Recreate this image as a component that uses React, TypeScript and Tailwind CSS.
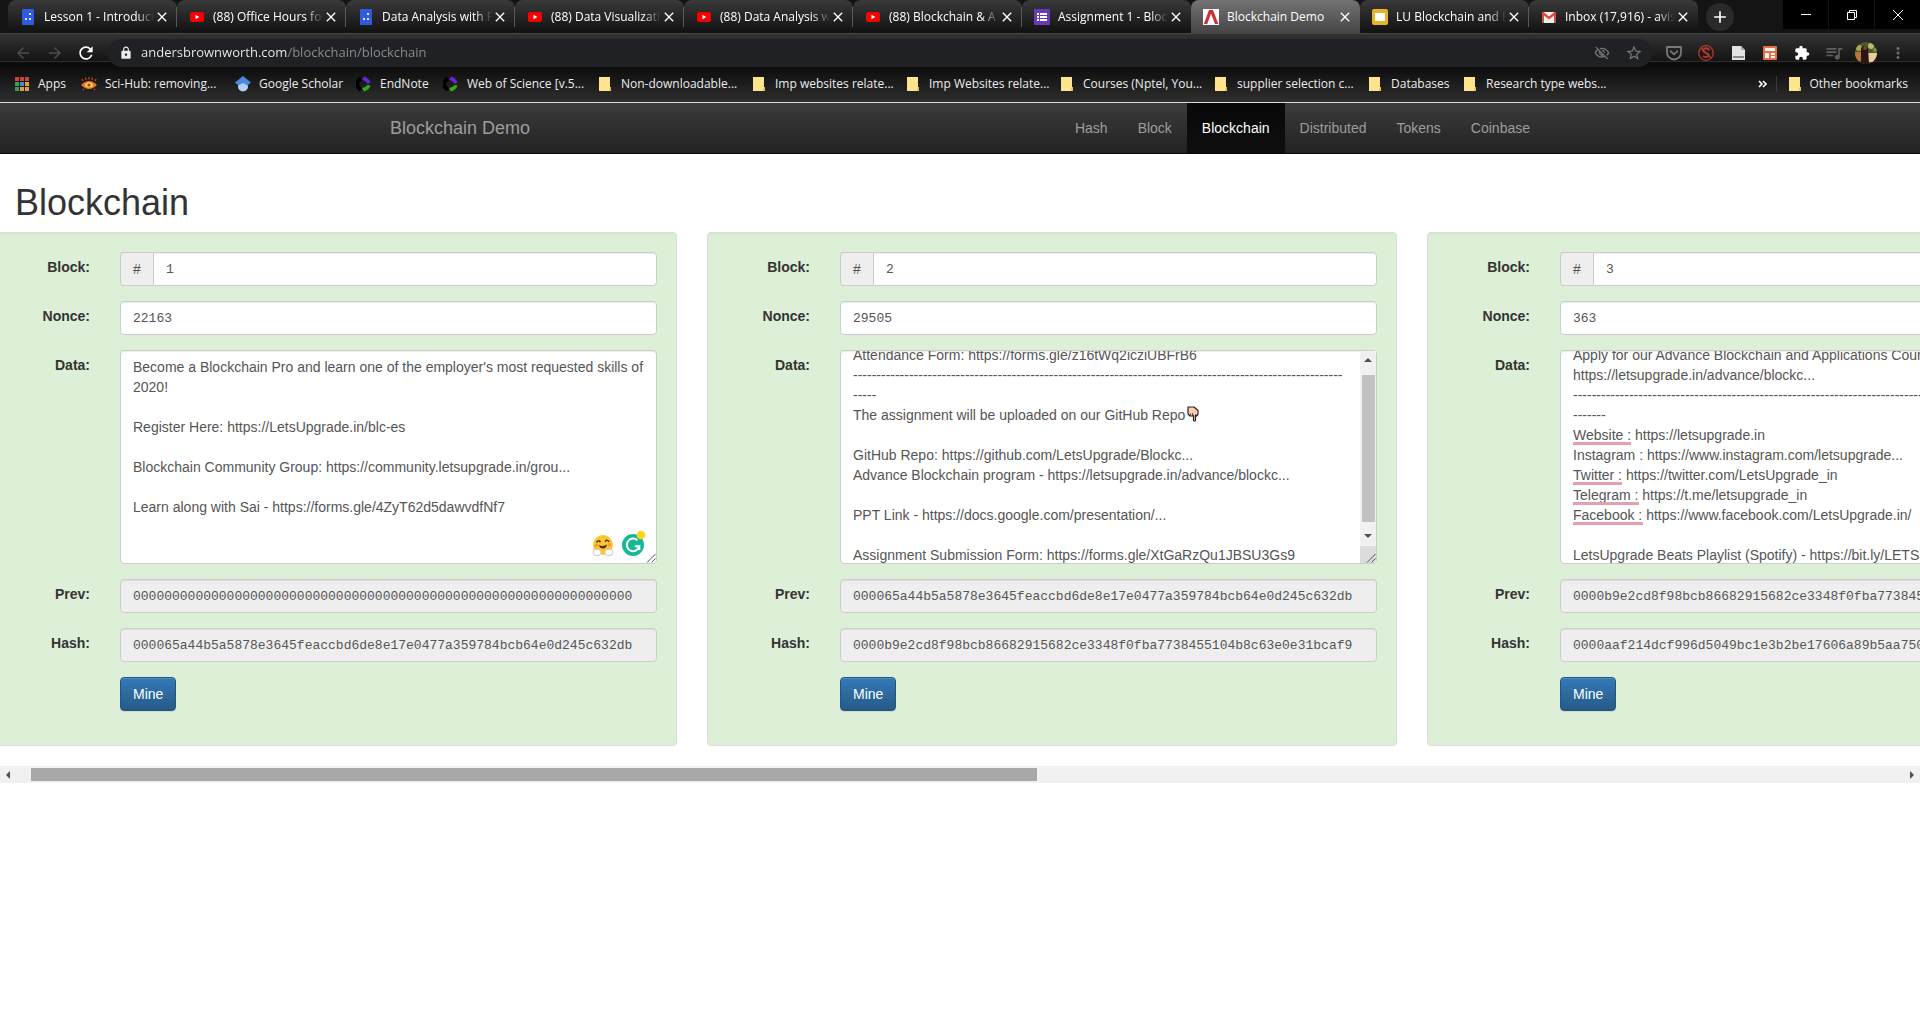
import { useEffect, useRef } from "react";
import type { ReactNode } from "react";
import {
  MdAdd,
  MdArrowBack,
  MdArrowForward,
  MdClose,
  MdExtension,
  MdLock,
  MdMoreVert,
  MdOutlineVisibilityOff,
  MdQueueMusic,
  MdRefresh,
  MdStarBorder,
} from "react-icons/md";

/* ---------- small drawings ---------- */

const BlueFavicon = () => (
  <svg viewBox="0 0 16 16" className="size-4 shrink-0">
    <rect x="2" width="12" height="16" rx="1" fill="#2f5be0" />
    <g fill="#dfe8ff">
      <rect x="9" y="4" width="2" height="2" />
      <rect x="5" y="9" width="2" height="2" />
      <rect x="9" y="9" width="2" height="2" />
    </g>
  </svg>
);

const YouTubeFavicon = () => (
  <svg viewBox="0 0 16 16" className="size-4 shrink-0">
    <rect x="1" y="3" width="14" height="10" rx="2" fill="#f60002" />
    <path d="M6.5 5.8v4.4L10.3 8z" fill="#fff" />
  </svg>
);

const FormsFavicon = () => (
  <svg viewBox="0 0 16 16" className="size-4 shrink-0">
    <rect width="16" height="16" rx="1" fill="#673ab7" />
    <g fill="#fff">
      <rect x="3" y="4" width="2" height="2" />
      <rect x="3" y="7" width="2" height="2" />
      <rect x="3" y="10" width="2" height="2" />
      <rect x="6" y="4" width="7" height="2" />
      <rect x="6" y="7" width="7" height="2" />
      <rect x="6" y="10" width="7" height="2" />
    </g>
  </svg>
);

const DemoFavicon = () => (
  <svg viewBox="0 0 16 16" className="size-4 shrink-0">
    <rect width="16" height="16" fill="#fff" />
    <path d="M6 1h4l5.4 14H12L8 4.500 4.300 15H.800z" fill="#cf3036" />
  </svg>
);

const SlidesFavicon = () => (
  <svg viewBox="0 0 16 16" className="size-4 shrink-0">
    <rect width="16" height="16" rx="2" fill="#e8b52a" />
    <rect x="3" y="4" width="10" height="8" fill="#fff" />
  </svg>
);

const GmailFavicon = () => (
  <svg viewBox="0 0 16 16" className="size-4 shrink-0">
    <path d="M1 3h14v11H1z" fill="#f2eeee" />
    <path d="M1 14V3h1.600L8 7.600 13.400 3H15v11h-2V6.500l-5 4-5-4V14z" fill="#d54b3d" />
  </svg>
);

const AppsIcon = () => (
  <svg viewBox="0 0 16 16" className="size-4">
    {["#c8463c", "#c8463c", "#c8463c", "#3f9b57", "#4b86d8", "#d9a53a", "#3f9b57", "#d9a53a", "#d9a53a"].map(
      (fill, i) => (
        <rect key={i} x={1 + (i % 3) * 5} y={1 + Math.floor(i / 3) * 5} width="4" height="4" fill={fill} />
      ),
    )}
  </svg>
);

const SciHubIcon = () => (
  <svg viewBox="0 0 16 16" className="size-4">
    <path d="M0 9q8-8 16 0-8 8-16 0z" fill="#e8742a" />
    <ellipse cx="8" cy="9" rx="4" ry="2.500" fill="#ffd34d" />
    <circle cx="8" cy="9" r="1.600" fill="#b13716" />
    <path d="M2 5 1 3M5 4 4.500 1.500M8 3.500V1M11 4l.5-2.500M14 5l1-2M3 13l-1 1M13 13l1 1" stroke="#b54a24" strokeWidth="1.300" />
  </svg>
);

const ScholarIcon = () => (
  <svg viewBox="0 0 16 16" className="size-4">
    <circle cx="8" cy="10.500" r="5" fill="#b4cff8" />
    <path d="M8 0 0 6.500 3.500 9.500 8 7l4.500 2.500L16 6.500z" fill="#4f86e0" />
  </svg>
);

const ClarivateIcon = () => (
  <svg viewBox="0 0 16 16" className="size-4">
    <path d="M5 2.500Q1 5 1 8t4 6" stroke="#000" strokeWidth="4" fill="none" />
    <path d="M8 .5Q13 2 14.500 6.500L11.500 8Q10 4.500 6 4z" fill="#6428d6" />
    <path d="M14.500 9.500Q13 14 8 15.500L6 12q4-.5 5.500-3z" fill="#2fae1e" />
  </svg>
);

const FolderIcon = () => (
  <svg viewBox="0 0 16 16" className="size-4">
    <path d="M2 1h11v10h1v4H2z" fill="#ffe48f" />
    <path d="M12 15v-3l1-1h1v4z" fill="#eec35a" />
  </svg>
);

const PocketIcon = () => (
  <svg viewBox="0 0 16 16" className="size-4" fill="none" stroke="#77797c" strokeWidth="1.800" strokeLinecap="round" strokeLinejoin="round">
    <path d="M1 2h14v5.500a7 7 0 0 1-14 0z" />
    <path d="m4.800 6.300 3.200 3 3.200-3" />
  </svg>
);

const BlockedIcon = () => (
  <svg viewBox="0 0 16 16" className="size-4" fill="none" stroke="#b8382a" strokeWidth="1.300">
    <circle cx="8" cy="8" r="7.300" />
    <path d="M11.500 5Q8.500 2 6 4t2 4 2 3.500-5-.5" strokeWidth="1.800" />
    <path d="M3 3l10 10" />
  </svg>
);

const PageIcon = () => (
  <svg viewBox="0 0 16 16" className="size-4">
    <path d="M2 1h9l4 4v10H2z" fill="#e2e3e3" />
    <path d="M11 1v4h4z" fill="#a8a8a8" />
    <path d="M3 11h11v2H3z" fill="#8a8a8a" />
  </svg>
);

const PanelIcon = () => (
  <svg viewBox="0 0 16 16" className="size-4">
    <rect x="1" y="1" width="14" height="14" rx="1" fill="#e2714a" />
    <path d="M3 3h10v3H3zM3 8h4v5H3zM9 8h4v2H9zM9 11h4v2H9z" fill="#fff3ea" />
  </svg>
);

const Avatar = () => (
  <svg viewBox="0 0 22 22" className="size-[22px] rounded-full">
    <rect width="22" height="22" fill="#4a5a2a" />
    <circle cx="4" cy="6" r="3" fill="#a5aa55" />
    <circle cx="16" cy="4" r="3" fill="#b9bd6a" />
    <circle cx="20" cy="8" r="2" fill="#7c9440" />
    <path d="M13 11h9v9h-9z" fill="#edc9a0" />
    <path d="M0 10h6v9H0z" fill="#b5763f" />
    <path d="M6 6q3-5 7 0l1 16H6z" fill="#2d1512" />
    <circle cx="10" cy="6" r="2" fill="#7a4030" />
  </svg>
);

const HugIcon = () => (
  <svg viewBox="0 0 22 22" className="size-[22px]">
    <circle cx="11" cy="11" r="10" fill="#fcc62d" />
    <path d="M4.500 8.500Q6.500 5.500 8.500 8M13 7.500q2.500-2.500 4 .5" stroke="#4a2a10" strokeWidth="1.500" fill="none" />
    <path d="M7 11q4 2 8-.5-.5 4-4 4T7 11z" fill="#5a2c12" />
    <circle cx="4.500" cy="11.500" r="1.800" fill="#f79a3c" />
    <circle cx="17.500" cy="11" r="1.800" fill="#f79a3c" />
    <rect x="1" y="15.500" width="8" height="6" rx="3" fill="#fff" stroke="#c9c9c9" />
    <rect x="13" y="15.500" width="8" height="6" rx="3" fill="#fff" stroke="#c9c9c9" />
  </svg>
);

const GrammarlyIcon = () => (
  <svg viewBox="0 0 24 26" className="h-[26px] w-6">
    <circle cx="11" cy="15" r="11" fill="#15b795" />
    <path d="M15.500 10.300a6.300 6.300 0 1 0 1.800 6h-4.500M17.300 16v4" stroke="#fff" strokeWidth="2" fill="none" />
    <circle cx="19" cy="5" r="4.300" fill="#ffd41f" />
  </svg>
);

const HandDownIcon = () => (
  <svg viewBox="0 0 12 16" className="h-4 w-3" strokeLinejoin="round">
    <path d="M1 1h6l4 3.500v4L9.500 10 8.500 9v5.500q-1 1.500-2 0V9.500L5 10H3L1 8z" fill="#f5cfb5" stroke="#2b211c" strokeWidth="1.200" />
    <path d="M3.500 7.500v2M5.500 7v2.500" stroke="#2b211c" strokeWidth=".8" />
  </svg>
);

const ResizeGrip = () => (
  <svg viewBox="0 0 10 10" className="size-[10px]">
    <path d="M1 9.500 9.500 1M5.500 9.500l4-4" stroke="#555" strokeWidth="1" />
  </svg>
);

/* ---------- browser chrome ---------- */

const tabs: { label: string; icon: ReactNode; active?: boolean }[] = [
  { label: "Lesson 1 - Introduct", icon: <BlueFavicon /> },
  { label: "(88) Office Hours fo", icon: <YouTubeFavicon /> },
  { label: "Data Analysis with P", icon: <BlueFavicon /> },
  { label: "(88) Data Visualizati", icon: <YouTubeFavicon /> },
  { label: "(88) Data Analysis w", icon: <YouTubeFavicon /> },
  { label: "(88) Blockchain & A", icon: <YouTubeFavicon /> },
  { label: "Assignment 1 - Bloc", icon: <FormsFavicon /> },
  { label: "Blockchain Demo", icon: <DemoFavicon />, active: true },
  { label: "LU Blockchain and E", icon: <SlidesFavicon /> },
  { label: "Inbox (17,916) - avis", icon: <GmailFavicon /> },
];

function TabStrip() {
  return (
    <div className="flex h-[33px] bg-[#141414] pl-2">
      {tabs.map((tab, i) => {
        const ruled = !tab.active && i !== 6 && i !== 9;
        return (
          <div
            key={tab.label}
            className={`flex w-[169px] items-center rounded-t-lg pl-3 ${
              tab.active
                ? "bg-linear-to-b from-[#747474] to-[#454545]"
                : "rounded-b-lg bg-linear-to-b from-[#3a3a3a] to-[#121212]"
            }`}
          >
            <button className="flex min-w-0 flex-1 items-center gap-2 text-left text-white">
              {tab.icon}
              <span
                className={`flex-1 overflow-hidden text-[12px] whitespace-nowrap ${
                  tab.active ? "" : "[mask-image:linear-gradient(to_right,black_84%,transparent)]"
                }`}
              >
                {tab.label}
              </span>
            </button>
            <button aria-label={`Close ${tab.label}`} className="text-white">
              <MdClose className="size-4" />
            </button>
            <span className={`ml-[6px] h-5 w-px ${ruled ? "bg-[#5a5a5a]" : ""}`} />
          </div>
        );
      })}
      <button
        aria-label="New tab"
        className="mt-[3px] ml-2 flex size-7 items-center justify-center rounded-full bg-[#2a2a2a] text-white"
      >
        <MdAdd className="size-5" />
      </button>
      <div className="ml-auto flex h-[29px] gap-px">
        <button aria-label="Minimize" className="flex w-[45px] items-center justify-center bg-black">
          <span className="h-px w-[10px] bg-white" />
        </button>
        <button aria-label="Restore" className="flex w-[45px] items-center justify-center bg-black">
          <svg viewBox="0 0 10 10" className="size-[10px]" fill="none" stroke="#fff">
            <path d="M.5 2.500h7v7h-7zM2.500 2.500v-2h7v7h-2" />
          </svg>
        </button>
        <button aria-label="Close" className="flex w-[45px] items-center justify-center bg-black">
          <svg viewBox="0 0 10 10" className="size-[10px]" stroke="#fff">
            <path d="m0 0 10 10M10 0 0 10" />
          </svg>
        </button>
      </div>
    </div>
  );
}

const extensions: { label: string; icon: ReactNode }[] = [
  { label: "Pocket", icon: <PocketIcon /> },
  { label: "Blocker", icon: <BlockedIcon /> },
  { label: "Document", icon: <PageIcon /> },
  { label: "Panel", icon: <PanelIcon /> },
  { label: "Extensions", icon: <MdExtension className="size-4 text-white" /> },
  { label: "Media", icon: <MdQueueMusic className="size-5 text-[#5e5e5e]" /> },
  { label: "Profile", icon: <Avatar /> },
  { label: "Menu", icon: <MdMoreVert className="size-[18px] text-[#6e6e6e]" /> },
];

function Toolbar() {
  return (
    <div className="flex h-[33px] items-center border-t border-[#454545] bg-[linear-gradient(#333_0px,#141414_27px,#2e2e2e_27px,#2e2e2e_28px,#0c0c0c_28px)] pt-[5px] pr-[6px] pl-[14px]">
      <button aria-label="Back" className="text-[#4c4c4c]">
        <MdArrowBack className="size-[18px]" />
      </button>
      <button aria-label="Forward" className="ml-[14px] text-[#4c4c4c]">
        <MdArrowForward className="size-[18px]" />
      </button>
      <button aria-label="Reload" className="ml-[12px] text-white">
        <MdRefresh className="size-5" />
      </button>
      <div className="ml-3 flex h-7 flex-1 items-center rounded-full bg-[#202124] pr-[2px] pl-[11px]">
        <MdLock className="size-[14px] text-[#e8eaed]" />
        <input
          aria-label="Address"
          defaultValue="andersbrownworth.com/blockchain/blockchain"
          className="ml-2 min-w-0 flex-1 bg-linear-[90deg,#f1f3f4_147px,#8b8e92_147px] bg-clip-text text-[13px] text-transparent outline-none"
        />
        <button aria-label="Cookies blocked" className="flex w-8 justify-center text-[#76787b]">
          <MdOutlineVisibilityOff className="size-4" />
        </button>
        <button aria-label="Bookmark" className="flex w-8 justify-center text-[#76787b]">
          <MdStarBorder className="size-[18px]" />
        </button>
      </div>
      <div className="ml-[6px] flex">
        {extensions.map((e) => (
          <button key={e.label} aria-label={e.label} className="flex w-8 items-center justify-center">
            {e.icon}
          </button>
        ))}
      </div>
    </div>
  );
}

const bookmarks: { label: string; icon: ReactNode; width: string }[] = [
  { label: "Apps", icon: <AppsIcon />, width: "w-[67px]" },
  { label: "Sci-Hub: removing...", icon: <SciHubIcon />, width: "w-[154px]" },
  { label: "Google Scholar", icon: <ScholarIcon />, width: "w-[121px]" },
  { label: "EndNote", icon: <ClarivateIcon />, width: "w-[87px]" },
  { label: "Web of Science [v.5...", icon: <ClarivateIcon />, width: "w-[154px]" },
  { label: "Non-downloadable...", icon: <FolderIcon />, width: "w-[154px]" },
  { label: "Imp websites relate...", icon: <FolderIcon />, width: "w-[154px]" },
  { label: "Imp Websites relate...", icon: <FolderIcon />, width: "w-[154px]" },
  { label: "Courses (Nptel, You...", icon: <FolderIcon />, width: "w-[154px]" },
  { label: "supplier selection c...", icon: <FolderIcon />, width: "w-[154px]" },
  { label: "Databases", icon: <FolderIcon />, width: "w-[95px]" },
  { label: "Research type webs...", icon: <FolderIcon />, width: "w-[154px]" },
];

function BookmarksBar() {
  return (
    <div className="flex h-9 items-center bg-linear-to-b from-[#0c0c0c] to-[#2f2f2f] pr-3 pl-[14px] text-[12px] whitespace-nowrap text-[#ececec]">
      {bookmarks.map((b) => (
        <a key={b.label} href="#" className={`flex items-center gap-2 ${b.width}`}>
          {b.icon}
          {b.label}
        </a>
      ))}
      <button aria-label="More bookmarks" className="ml-auto">
        <svg viewBox="0 0 9 8" className="h-2 w-[9px]" fill="none" stroke="#fff" strokeWidth="1.600">
          <path d="m1 1 3 3-3 3M5 1l3 3-3 3" />
        </svg>
      </button>
      <span className="mr-[10px] ml-[9px] h-4 w-px bg-[#3a3a3a]" />
      <a href="#" className="flex items-center gap-[6px]">
        <FolderIcon />
        Other bookmarks
      </a>
    </div>
  );
}

/* ---------- page ---------- */

const navItems = ["Hash", "Block", "Blockchain", "Distributed", "Tokens", "Coinbase"];

function Navbar() {
  return (
    <nav className="h-[51px] border-b border-[#080808] bg-linear-to-b from-[#3c3c3c] to-[#222]">
      <div className="mx-auto flex h-full max-w-[1170px] justify-between">
        <a href="#" className="px-[15px] text-[18px] leading-[50px] text-[#9d9d9d]">
          Blockchain Demo
        </a>
        <div className="flex text-[14px] leading-[50px] text-[#9d9d9d]">
          {navItems.map((item) => (
            <a
              key={item}
              href="#"
              className={
                item === "Blockchain" ? "bg-linear-to-b from-[#080808] to-[#0f0f0f] px-[15px] text-white" : "px-[15px]"
              }
            >
              {item}
            </a>
          ))}
        </div>
      </div>
    </nav>
  );
}

type Block = { id: number; nonce: string; data: string; scroll: number; prev: string; hash: string; extra?: ReactNode };

const blocks: Block[] = [
  {
    id: 1,
    nonce: "22163",
    scroll: 0,
    data: [
      "Become a Blockchain Pro and learn one of the employer's most requested skills of 2020!",
      "",
      "Register Here: https://LetsUpgrade.in/blc-es",
      "",
      "Blockchain Community Group: https://community.letsupgrade.in/grou...",
      "",
      "Learn along with Sai - https://forms.gle/4ZyT62d5dawvdfNf7",
    ].join("\n"),
    prev: "0".repeat(64),
    hash: "000065a44b5a5878e3645feaccbd6de8e17e0477a359784bcb64e0d245c632db",
    extra: (
      <>
        <div className="pointer-events-none absolute right-[11px] bottom-2 flex items-end gap-2">
          <HugIcon />
          <GrammarlyIcon />
        </div>
        <div className="pointer-events-none absolute right-px bottom-px">
          <ResizeGrip />
        </div>
      </>
    ),
  },
  {
    id: 2,
    nonce: "29505",
    scroll: 12,
    data: [
      "Attendance Form: https://forms.gle/z16tWq2icziUBFrB6",
      "-".repeat(105),
      "-----",
      "The assignment will be uploaded on our GitHub Repo",
      "",
      "GitHub Repo: https://github.com/LetsUpgrade/Blockc...",
      "Advance Blockchain program - https://letsupgrade.in/advance/blockc...",
      "",
      "PPT Link - https://docs.google.com/presentation/...",
      "",
      "Assignment Submission Form: https://forms.gle/XtGaRzQu1JBSU3Gs9",
    ].join("\n"),
    prev: "000065a44b5a5878e3645feaccbd6de8e17e0477a359784bcb64e0d245c632db",
    hash: "0000b9e2cd8f98bcb86682915682ce3348f0fba7738455104b8c63e0e31bcaf9",
    extra: (
      <>
        <div className="pointer-events-none absolute top-14 left-[347px]">
          <HandDownIcon />
        </div>
        <div className="absolute inset-y-px right-px flex w-4 flex-col items-center bg-[#f1f1f1]">
          <svg viewBox="0 0 8 4" className="my-[7px] h-1 w-2" fill="#505050">
            <path d="M0 4h8L4 0z" />
          </svg>
          <span className="mt-[6px] h-[147px] w-[13px] bg-[#c1c1c1]" />
          <svg viewBox="0 0 8 4" className="mt-3 h-1 w-2" fill="#505050">
            <path d="M0 0h8L4 4z" />
          </svg>
          <span className="mt-auto flex h-[17px] w-full items-end justify-end bg-[#dcdcdc]">
            <ResizeGrip />
          </span>
        </div>
      </>
    ),
  },
  {
    id: 3,
    nonce: "363",
    scroll: 12,
    data: [
      "Apply for our Advance Blockchain and Applications Course:",
      "https://letsupgrade.in/advance/blockc...",
      "-".repeat(105),
      "-------",
      "Website : https://letsupgrade.in",
      "Instagram : https://www.instagram.com/letsupgrade...",
      "Twitter : https://twitter.com/LetsUpgrade_in",
      "Telegram : https://t.me/letsupgrade_in",
      "Facebook : https://www.facebook.com/LetsUpgrade.in/",
      "",
      "LetsUpgrade Beats Playlist (Spotify) - https://bit.ly/LETSUPGRADE",
    ].join("\n"),
    prev: "0000b9e2cd8f98bcb86682915682ce3348f0fba7738455104b8c63e0e31bcaf9",
    hash: "0000aaf214dcf996d5049bc1e3b2be17606a89b5aa7504f1c0d6b8e2397ac51e",
    extra: (
      <div className="pointer-events-none absolute top-[92px] left-[13px] flex flex-col">
        <span className="h-[3px] w-[58px] bg-[#e59fb1]" />
        <span className="mt-[37px] h-[3px] w-[49px] bg-[#e59fb1]" />
        <span className="mt-[17px] h-[3px] w-[66px] bg-[#e59fb1]" />
        <span className="mt-[17px] h-[3px] w-[70px] bg-[#e59fb1]" />
      </div>
    ),
  },
];

const control = "w-full rounded border border-[#ccc] px-3 text-[#555] shadow-[inset_0_1px_1px_rgba(0,0,0,0.075)]";
const mono = "h-[34px] font-['Liberation_Mono',monospace] text-[13px]";

function Row({ label, htmlFor, children }: { label?: string; htmlFor?: string; children: ReactNode }) {
  return (
    <div className="mb-[15px] flex">
      <div className="w-[83px] shrink-0 pt-[5px] text-right text-[14px] leading-5 font-bold text-[#333]">
        {label && <label htmlFor={htmlFor}>{label}</label>}
      </div>
      <div className="ml-[30px] min-w-0 flex-1">{children}</div>
    </div>
  );
}

function BlockCard({ block }: { block: Block }) {
  const area = useRef<HTMLTextAreaElement>(null);
  useEffect(() => {
    if (area.current) area.current.scrollTop = block.scroll;
  }, [block.scroll]);
  const id = (name: string) => `block${block.id}-${name}`;

  return (
    <form
      onSubmit={(e) => e.preventDefault()}
      className="w-[690px] shrink-0 rounded border border-[#d9dfd6] bg-[#deefd8] p-[19px] shadow-[inset_0_1px_1px_rgba(0,0,0,0.05)]"
    >
      <Row label="Block:" htmlFor={id("number")}>
        <div className="flex">
          <span className="flex h-[34px] w-[33px] shrink-0 items-center justify-center rounded-l border border-r-0 border-[#ccc] bg-[#eee] text-[14px] text-[#555]">
            #
          </span>
          <input id={id("number")} defaultValue={block.id} className={`${control} ${mono} rounded-l-none bg-white`} />
        </div>
      </Row>
      <Row label="Nonce:" htmlFor={id("nonce")}>
        <input id={id("nonce")} defaultValue={block.nonce} className={`${control} ${mono} bg-white`} />
      </Row>
      <Row label="Data:" htmlFor={id("data")}>
        <div className="relative">
          <textarea
            id={id("data")}
            ref={area}
            rows={10}
            defaultValue={block.data}
            className={`${control} block resize-none overflow-hidden bg-white py-[6px] text-[14px] leading-5`}
          />
          {block.extra}
        </div>
      </Row>
      <Row label="Prev:" htmlFor={id("prev")}>
        <input id={id("prev")} readOnly value={block.prev} className={`${control} ${mono} bg-[#eee]`} />
      </Row>
      <Row label="Hash:" htmlFor={id("hash")}>
        <input id={id("hash")} readOnly value={block.hash} className={`${control} ${mono} bg-[#eee]`} />
      </Row>
      <Row>
        <button className="block h-[34px] rounded border border-[#245580] bg-linear-to-b from-[#337ab7] to-[#265a88] px-3 text-[14px] text-white shadow-[inset_0_1px_0_rgba(255,255,255,0.15),0_1px_1px_rgba(0,0,0,0.075)]">
          Mine
        </button>
      </Row>
    </form>
  );
}

function HorizontalScrollbar() {
  return (
    <div className="mt-5 flex h-[17px] items-center bg-[#f1f1f1]">
      <svg viewBox="0 0 4 8" className="mx-[6px] h-2 w-1" fill="#505050">
        <path d="M4 0v8L0 4z" />
      </svg>
      <div className="flex-1 px-[15px]">
        <div className="h-[13px] w-13/24 bg-[#a8a8a8]" />
      </div>
      <svg viewBox="0 0 4 8" className="mx-[6px] h-2 w-1" fill="#505050">
        <path d="M0 0v8l4-4z" />
      </svg>
    </div>
  );
}

export default function App() {
  return (
    <div className="min-h-screen overflow-x-hidden bg-white">
      <header className="border-b border-[#dcdcdc] font-['Open_Sans',sans-serif]">
        <TabStrip />
        <Toolbar />
        <BookmarksBar />
      </header>
      <div className="font-['Liberation_Sans',Arial,sans-serif]">
        <Navbar />
        <main>
          <h1 className="mt-[29px] mb-[9px] px-[15px] text-[36px] leading-10 text-[#333]">Blockchain</h1>
          <div className="-ml-[13px] flex gap-[30px]">
            {blocks.map((b) => (
              <BlockCard key={b.id} block={b} />
            ))}
          </div>
          <HorizontalScrollbar />
        </main>
      </div>
    </div>
  );
}
